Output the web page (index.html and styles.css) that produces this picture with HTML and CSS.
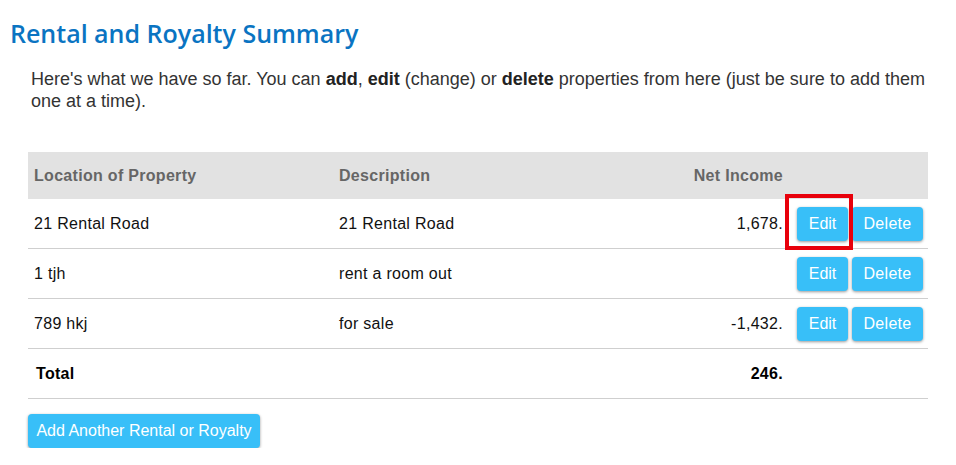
FILE: index.html
```html
<!DOCTYPE html>
<html>
<head>
<meta charset="utf-8">
<link rel="stylesheet" href="styles.css">
</head>
<body>
<div class="page">
  <h1 class="title">Rental and Royalty Summary</h1>
  <div class="content">
    <p class="intro">Here's what we have so far. You can <b>add</b>, <b>edit</b> (change) or <b>delete</b> properties from here (just be sure to add them one at a time).</p>
    <div class="table-wrap">
      <table class="summary">
        <colgroup>
          <col class="c-loc"><col class="c-desc"><col class="c-net"><col class="c-act">
        </colgroup>
        <thead>
          <tr><th>Location of Property</th><th>Description</th><th class="num">Net Income</th><th></th></tr>
        </thead>
        <tbody>
          <tr><td>21 Rental Road</td><td>21 Rental Road</td><td class="num">1,678.</td><td class="act"><span class="btn">Edit</span><span class="btn">Delete</span></td></tr>
          <tr><td>1 tjh</td><td>rent a room out</td><td class="num"></td><td class="act"><span class="btn">Edit</span><span class="btn">Delete</span></td></tr>
          <tr><td>789 hkj</td><td>for sale</td><td class="num">-1,432.</td><td class="act"><span class="btn">Edit</span><span class="btn">Delete</span></td></tr>
          <tr class="total"><td>Total</td><td></td><td class="num">246.</td><td></td></tr>
        </tbody>
      </table>
      <div class="highlight"></div>
    </div>
    <span class="btn btn-add">Add Another Rental or Royalty</span>
  </div>
</div>
</body>
</html>
```
FILE: styles.css
```css
html, body { margin: 0; padding: 0; background: #fff; }
.page { padding: 16px 0 0 10px; width: 946px; font-family: "Liberation Sans", Arial, sans-serif; }
.title {
  margin: 0;
  font-family: "Open Sans", "Noto Sans", sans-serif;
  font-weight: 600;
  font-size: 25px;
  line-height: 34px;
  color: #0a74c2;
}
.content { padding-left: 18px; width: 900px; }
.intro {
  margin: 18px 0 0 3px;
  font-size: 18px;
  line-height: 22px;
  color: #333;
  width: 900px;
}
.intro b { color: #222; }
.table-wrap { position: relative; margin-top: 40px; }
.summary {
  width: 900px;
  border-collapse: collapse;
  table-layout: fixed;
  font-size: 16px;
  letter-spacing: 0.3px;
  color: #111;
}
.c-loc { width: 305px; }
.c-desc { width: 270px; }
.c-net { width: 188px; }
.c-act { width: 137px; }
.summary th {
  background: #e2e2e2;
  color: #666;
  font-weight: bold;
  text-align: left;
  height: 47px;
  padding: 0 6px;
  font-size: 16px;
}
.summary td {
  height: 49px;
  padding: 0 6px;
  border-bottom: 1px solid #cfcfcf;
}
.summary .num { text-align: right; padding-right: 8px; }
.summary td.act { padding: 0 4px 0 6px; white-space: nowrap; letter-spacing: 0; }
.total td { font-weight: bold; color: #000; }
.total td:first-child { padding-left: 8px; }
.btn {
  display: inline-block;
  background: #38bff8;
  color: #fff;
  font-size: 16px;
  line-height: 34px;
  height: 34px;
  padding: 0 13px;
  border-radius: 4px;
  box-shadow: 0 1px 3px rgba(0,0,0,0.4);
  vertical-align: middle;
  white-space: nowrap;
}
.act .btn + .btn { margin-left: 4px; }
.act .btn:first-child { width: 51px; padding: 0; text-align: center; }
.act .btn:last-child { width: 71px; padding: 0; text-align: center; letter-spacing: 0.3px; }
.btn-add { margin-top: 15px; padding: 0; width: 232px; text-align: center; letter-spacing: 0; }
.highlight {
  position: absolute;
  left: 757px;
  top: 42px;
  width: 60px;
  height: 48px;
  border: 4px solid #e8000b;
}
```
